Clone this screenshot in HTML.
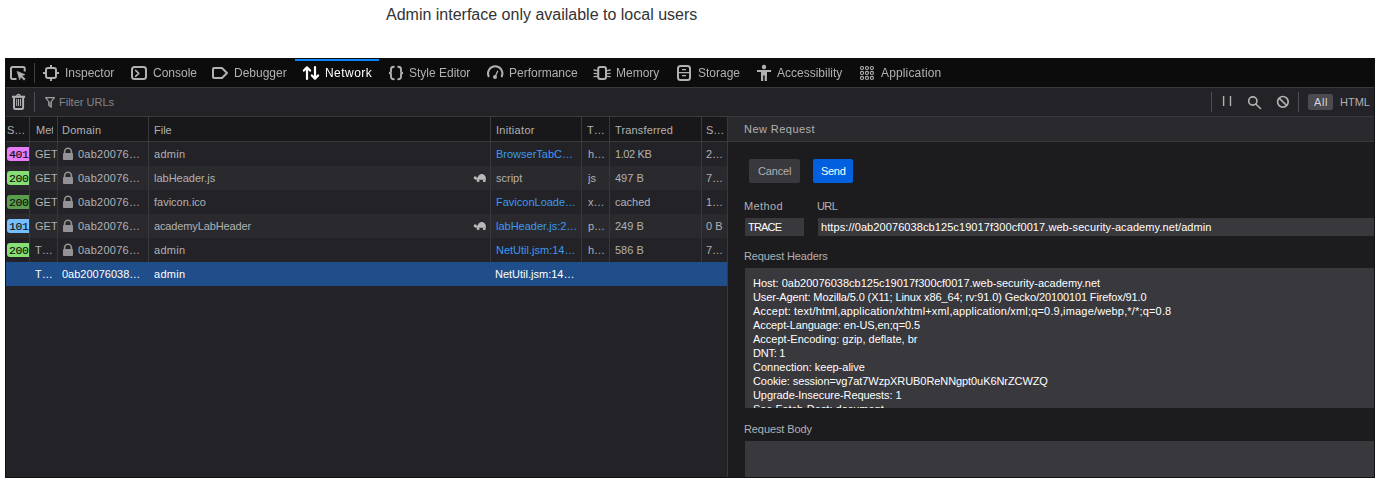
<!DOCTYPE html><html><head><meta charset="utf-8"><style>
*{box-sizing:border-box;margin:0;padding:0}
html,body{width:1380px;height:483px;overflow:hidden;background:#fff}
body{position:relative;font-family:"Liberation Sans",sans-serif}
.a{position:absolute;white-space:pre}
.r{position:absolute}
.t{position:absolute;white-space:pre;font-size:11px;line-height:24px;color:#b1b1b3;overflow:hidden}
.tab{position:absolute;white-space:pre;font-size:12px;line-height:29px;top:59px;color:#b1b1b3;will-change:transform}
svg{position:absolute;overflow:visible}
.lnk{color:#75bfff}
.badge{position:absolute;height:14px;font-family:"Liberation Mono",monospace;font-size:11.5px;letter-spacing:-0.45px;line-height:15px;-webkit-text-stroke:0.12px #0c0c0d;color:#0c0c0d;border-radius:3px 0 0 3px;padding-left:2px;overflow:hidden;white-space:pre}
.mono{font-family:"Liberation Mono",monospace}
</style></head><body>
<div class="a" style="left:386px;top:6px;font-size:16px;line-height:18px;color:#333">Admin interface only available to local users</div>
<div class="r" style="left:5px;top:58px;width:1370px;height:420px;background:#121214"></div>
<div class="r" style="left:6px;top:58px;width:1368px;height:29px;background:#0c0c0d"></div>
<div class="r" style="left:6px;top:87px;width:1368px;height:1px;background:#38383d"></div>
<div class="r" style="left:295px;top:59px;width:84px;height:2px;background:#0a84ff"></div>
<div class="r" style="left:6px;top:88px;width:1368px;height:28px;background:#232327"></div>
<div class="r" style="left:6px;top:116px;width:1368px;height:1px;background:#38383d"></div>
<div class="r" style="left:6px;top:117px;width:721px;height:360px;background:#232327"></div>
<div class="r" style="left:6px;top:117px;width:721px;height:24px;background:#18181a"></div>
<div class="r" style="left:6px;top:141px;width:1368px;height:1px;background:#38383d"></div>
<div class="r" style="left:6px;top:142px;width:721px;height:24px;background:#232327"></div>
<div class="r" style="left:6px;top:166px;width:721px;height:24px;background:#2a2a2e"></div>
<div class="r" style="left:6px;top:190px;width:721px;height:24px;background:#232327"></div>
<div class="r" style="left:6px;top:214px;width:721px;height:24px;background:#2a2a2e"></div>
<div class="r" style="left:6px;top:238px;width:721px;height:24px;background:#232327"></div>
<div class="r" style="left:29px;top:117px;width:1px;height:145px;background:#38383d"></div>
<div class="r" style="left:57px;top:117px;width:1px;height:145px;background:#38383d"></div>
<div class="r" style="left:148px;top:117px;width:1px;height:145px;background:#38383d"></div>
<div class="r" style="left:490px;top:117px;width:1px;height:145px;background:#38383d"></div>
<div class="r" style="left:581px;top:117px;width:1px;height:145px;background:#38383d"></div>
<div class="r" style="left:609px;top:117px;width:1px;height:145px;background:#38383d"></div>
<div class="r" style="left:701px;top:117px;width:1px;height:145px;background:#38383d"></div>
<div class="r" style="left:6px;top:262px;width:721px;height:24px;background:#204e8a"></div>
<div class="r" style="left:727px;top:117px;width:1px;height:360px;background:#38383d"></div>
<div class="r" style="left:728px;top:117px;width:646px;height:24px;background:#2a2a2e"></div>
<div class="r" style="left:728px;top:142px;width:646px;height:335px;background:#1c1c1f"></div>
<div class="tab" style="left:65px;color:#b1b1b3;letter-spacing:0px">Inspector</div>
<div class="tab" style="left:153px;color:#b1b1b3;letter-spacing:0px">Console</div>
<div class="tab" style="left:234px;color:#b1b1b3;letter-spacing:0px">Debugger</div>
<div class="tab" style="left:325px;color:#fff;letter-spacing:0.45px">Network</div>
<div class="tab" style="left:409px;color:#b1b1b3;letter-spacing:0px">Style Editor</div>
<div class="tab" style="left:509px;color:#b1b1b3;letter-spacing:0px">Performance</div>
<div class="tab" style="left:616px;color:#b1b1b3;letter-spacing:0px">Memory</div>
<div class="tab" style="left:698px;color:#b1b1b3;letter-spacing:0px">Storage</div>
<div class="tab" style="left:777px;color:#b1b1b3;letter-spacing:0px">Accessibility</div>
<div class="tab" style="left:881px;color:#b1b1b3;letter-spacing:0.15px">Application</div>
<div class="a" style="left:59px;top:88px;font-size:11px;line-height:28px;color:#85858a">Filter URLs</div>
<div class="r" style="left:1308px;top:94px;width:25px;height:16px;background:#4a4a4f;border-radius:2px"></div>
<div class="a" style="left:1314px;top:88px;font-size:11px;line-height:28px;color:#d7d7db;letter-spacing:0.6px">All</div>
<div class="a" style="left:1340px;top:88px;font-size:11px;line-height:28px;color:#b1b1b3">HTML</div>
<div class="r" style="left:34px;top:63px;width:1px;height:20px;background:#3f3f42"></div>
<div class="r" style="left:34px;top:92px;width:1px;height:20px;background:#4e4e52"></div>
<div class="r" style="left:1211px;top:92px;width:1px;height:20px;background:#4e4e52"></div>
<div class="r" style="left:1298px;top:92px;width:1px;height:20px;background:#4e4e52"></div>
<div class="t" style="left:7px;top:118px;width:22px">S…</div>
<div class="t" style="left:36px;top:118px;width:17px">Met</div>
<div class="t" style="left:62px;top:118px;width:85px;letter-spacing:0.25px">Domain</div>
<div class="t" style="left:154px;top:118px;width:330px">File</div>
<div class="t" style="left:496px;top:118px;width:85px;letter-spacing:0.3px">Initiator</div>
<div class="t" style="left:587px;top:118px;width:22px">T…</div>
<div class="t" style="left:615px;top:118px;width:85px;letter-spacing:0.15px">Transferred</div>
<div class="t" style="left:706px;top:118px;width:20px">S…</div>
<div class="badge" style="left:7px;top:147px;width:22px;background:#e67cf6">401</div>
<div class="t" style="left:35px;top:142px;width:22px">GET</div>
<svg style="left:63px;top:148px" width="10" height="12" viewBox="0 0 10 12"><path d="M1.6 5.2 V3.6 A3.4 3.4 0 0 1 8.4 3.6 V5.2" fill="none" stroke="#939395" stroke-width="1.6"/><rect x="0" y="5" width="10" height="7" rx="0.8" fill="#939395"/></svg>
<div class="t" style="left:78px;top:142px;width:70px;letter-spacing:0.25px">0ab20076…</div>
<div class="t" style="left:154px;top:142px;width:330px;letter-spacing:0.3px">admin</div>
<div class="t" style="left:496px;top:142px;width:85px;color:#3e98f0">BrowserTabC…</div>
<div class="t" style="left:588px;top:142px;width:21px">h…</div>
<div class="t" style="left:615px;top:142px;width:85px;letter-spacing:-0.4px">1.02 KB</div>
<div class="t" style="left:706px;top:142px;width:21px">2…</div>
<div class="badge" style="left:7px;top:171px;width:22px;background:#86de74">200</div>
<div class="t" style="left:35px;top:166px;width:22px">GET</div>
<svg style="left:63px;top:172px" width="10" height="12" viewBox="0 0 10 12"><path d="M1.6 5.2 V3.6 A3.4 3.4 0 0 1 8.4 3.6 V5.2" fill="none" stroke="#939395" stroke-width="1.6"/><rect x="0" y="5" width="10" height="7" rx="0.8" fill="#939395"/></svg>
<div class="t" style="left:78px;top:166px;width:70px;letter-spacing:0.25px">0ab20076…</div>
<div class="t" style="left:154px;top:166px;width:330px">labHeader.js</div>
<svg style="left:473px;top:174px" width="14" height="8" viewBox="0 0 14 8"><path d="M4.4 5.7 C4.4 2.1 6.5 0 8.8 0 C11.1 0 13 2.1 13 5.7 Z" fill="#b8b8bb"/><circle cx="2.2" cy="3.8" r="1.5" fill="#b8b8bb"/><rect x="2.2" y="3.6" width="3" height="2.1" fill="#b8b8bb"/><rect x="3.8" y="5.5" width="2.6" height="2.4" fill="#b8b8bb"/><rect x="9.9" y="5.5" width="2.7" height="2.4" fill="#b8b8bb"/></svg>
<div class="t" style="left:496px;top:166px;width:85px;color:#b1b1b3">script</div>
<div class="t" style="left:588px;top:166px;width:21px">js</div>
<div class="t" style="left:615px;top:166px;width:85px">497 B</div>
<div class="t" style="left:706px;top:166px;width:21px">7…</div>
<div class="badge" style="left:7px;top:195px;width:22px;background:#5a9e4d">200</div>
<div class="t" style="left:35px;top:190px;width:22px">GET</div>
<svg style="left:63px;top:196px" width="10" height="12" viewBox="0 0 10 12"><path d="M1.6 5.2 V3.6 A3.4 3.4 0 0 1 8.4 3.6 V5.2" fill="none" stroke="#939395" stroke-width="1.6"/><rect x="0" y="5" width="10" height="7" rx="0.8" fill="#939395"/></svg>
<div class="t" style="left:78px;top:190px;width:70px;letter-spacing:0.25px">0ab20076…</div>
<div class="t" style="left:154px;top:190px;width:330px">favicon.ico</div>
<div class="t" style="left:496px;top:190px;width:85px;color:#3e98f0">FaviconLoade…</div>
<div class="t" style="left:588px;top:190px;width:21px">x…</div>
<div class="t" style="left:615px;top:190px;width:85px">cached</div>
<div class="t" style="left:706px;top:190px;width:21px">1…</div>
<div class="badge" style="left:7px;top:219px;width:22px;background:#75bfff">101</div>
<div class="t" style="left:35px;top:214px;width:22px">GET</div>
<svg style="left:63px;top:220px" width="10" height="12" viewBox="0 0 10 12"><path d="M1.6 5.2 V3.6 A3.4 3.4 0 0 1 8.4 3.6 V5.2" fill="none" stroke="#939395" stroke-width="1.6"/><rect x="0" y="5" width="10" height="7" rx="0.8" fill="#939395"/></svg>
<div class="t" style="left:78px;top:214px;width:70px;letter-spacing:0.25px">0ab20076…</div>
<div class="t" style="left:154px;top:214px;width:330px;letter-spacing:-0.13px">academyLabHeader</div>
<svg style="left:473px;top:222px" width="14" height="8" viewBox="0 0 14 8"><path d="M4.4 5.7 C4.4 2.1 6.5 0 8.8 0 C11.1 0 13 2.1 13 5.7 Z" fill="#b8b8bb"/><circle cx="2.2" cy="3.8" r="1.5" fill="#b8b8bb"/><rect x="2.2" y="3.6" width="3" height="2.1" fill="#b8b8bb"/><rect x="3.8" y="5.5" width="2.6" height="2.4" fill="#b8b8bb"/><rect x="9.9" y="5.5" width="2.7" height="2.4" fill="#b8b8bb"/></svg>
<div class="t" style="left:496px;top:214px;width:85px;color:#3e98f0">labHeader.js:2…</div>
<div class="t" style="left:588px;top:214px;width:21px">p…</div>
<div class="t" style="left:615px;top:214px;width:85px">249 B</div>
<div class="t" style="left:706px;top:214px;width:21px">0 B</div>
<div class="badge" style="left:7px;top:243px;width:22px;background:#86de74">200</div>
<div class="t" style="left:35px;top:238px;width:22px">T…</div>
<svg style="left:63px;top:244px" width="10" height="12" viewBox="0 0 10 12"><path d="M1.6 5.2 V3.6 A3.4 3.4 0 0 1 8.4 3.6 V5.2" fill="none" stroke="#939395" stroke-width="1.6"/><rect x="0" y="5" width="10" height="7" rx="0.8" fill="#939395"/></svg>
<div class="t" style="left:78px;top:238px;width:70px;letter-spacing:0.25px">0ab20076…</div>
<div class="t" style="left:154px;top:238px;width:330px;letter-spacing:0.3px">admin</div>
<div class="t" style="left:496px;top:238px;width:85px;color:#3e98f0">NetUtil.jsm:14…</div>
<div class="t" style="left:588px;top:238px;width:21px">h…</div>
<div class="t" style="left:615px;top:238px;width:85px">586 B</div>
<div class="t" style="left:706px;top:238px;width:21px">7…</div>
<div class="t" style="left:35px;top:262px;width:22px;color:#fff">T…</div>
<div class="t" style="left:62px;top:262px;width:86px;color:#fff">0ab20076038…</div>
<div class="t" style="left:154px;top:262px;width:330px;color:#fff;letter-spacing:0.3px">admin</div>
<div class="t" style="left:495px;top:262px;width:86px;color:#fff">NetUtil.jsm:14…</div>
<div class="t" style="left:744px;top:117px;width:200px;color:#b1b1b3;letter-spacing:0.45px">New Request</div>
<div class="r" style="left:749px;top:159px;width:51px;height:24px;background:#38383d;border-radius:2px"></div>
<div class="a" style="left:758px;top:159px;font-size:11px;line-height:24px;color:#b1b1b3;letter-spacing:-0.15px">Cancel</div>
<div class="r" style="left:813px;top:159px;width:40px;height:24px;background:#0060df;border-radius:2px"></div>
<div class="a" style="left:821px;top:159px;font-size:11px;line-height:24px;color:#fff;letter-spacing:-0.3px">Send</div>
<div class="a" style="left:744px;top:194px;font-size:11px;line-height:24px;color:#b1b1b3;letter-spacing:0.4px">Method</div>
<div class="a" style="left:817px;top:194px;font-size:11px;line-height:24px;color:#b1b1b3;letter-spacing:-0.6px">URL</div>
<div class="r" style="left:745px;top:218px;width:59px;height:18px;background:#38383d"></div>
<div class="r" style="left:818px;top:218px;width:556px;height:18px;background:#38383d"></div>
<div class="a" style="left:748px;top:218px;font-size:11px;line-height:18px;color:#fff;letter-spacing:-0.8px">TRACE</div>
<div class="a" style="left:821px;top:218px;font-size:11px;line-height:18px;color:#fff;letter-spacing:0.086px">https://0ab20076038cb125c19017f300cf0017.web-security-academy.net/admin</div>
<div class="a" style="left:744px;top:244px;font-size:11px;line-height:24px;color:#b1b1b3;letter-spacing:-0.13px">Request Headers</div>
<div class="r" style="left:745px;top:268px;width:629px;height:140px;background:#38383d;overflow:hidden"><div class="a" style="left:8px;top:8px;font-size:11px;line-height:14px;color:#fff;letter-spacing:0px">Host: 0ab20076038cb125c19017f300cf0017.web-security-academy.net</div><div class="a" style="left:8px;top:22px;font-size:11px;line-height:14px;color:#fff;letter-spacing:-0.115px">User-Agent: Mozilla/5.0 (X11; Linux x86_64; rv:91.0) Gecko/20100101 Firefox/91.0</div><div class="a" style="left:8px;top:36px;font-size:11px;line-height:14px;color:#fff;letter-spacing:0.17px">Accept: text/html,application/xhtml+xml,application/xml;q=0.9,image/webp,*/*;q=0.8</div><div class="a" style="left:8px;top:50px;font-size:11px;line-height:14px;color:#fff;letter-spacing:-0.087px">Accept-Language: en-US,en;q=0.5</div><div class="a" style="left:8px;top:64px;font-size:11px;line-height:14px;color:#fff;letter-spacing:0px">Accept-Encoding: gzip, deflate, br</div><div class="a" style="left:8px;top:78px;font-size:11px;line-height:14px;color:#fff;letter-spacing:-0.25px">DNT: 1</div><div class="a" style="left:8px;top:92px;font-size:11px;line-height:14px;color:#fff;letter-spacing:0px">Connection: keep-alive</div><div class="a" style="left:8px;top:106px;font-size:11px;line-height:14px;color:#fff;letter-spacing:-0.08px">Cookie: session=vg7at7WzpXRUB0ReNNgpt0uK6NrZCWZQ</div><div class="a" style="left:8px;top:120px;font-size:11px;line-height:14px;color:#fff;letter-spacing:-0.07px">Upgrade-Insecure-Requests: 1</div><div class="a" style="left:8px;top:134px;font-size:11px;line-height:14px;color:#fff;letter-spacing:0px">Sec-Fetch-Dest: document</div></div>
<div class="a" style="left:744px;top:417px;font-size:11px;line-height:24px;color:#b1b1b3;letter-spacing:-0.1px">Request Body</div>
<div class="r" style="left:745px;top:441px;width:629px;height:36px;background:#38383d"></div>
<svg style="left:0;top:0" width="1380" height="483" viewBox="0 0 1380 483"><path d="M16.5 79 H12.5 Q11 79 11 77.5 V68.5 Q11 67 12.5 67 H23.2 Q24.7 67 24.7 68.5 V71.5" fill="none" stroke="#b1b1b3" stroke-width="2"/><path d="M17 71.3 L25 74.6 L22 75.7 L25.3 79 L24 80.2 L20.8 77 L19.6 80 Z" fill="#b1b1b3" stroke="#b1b1b3" stroke-width="0.5" stroke-linejoin="round"/><rect x="46" y="68" width="10" height="10" rx="2" fill="none" stroke="#b1b1b3" stroke-width="2"/><path d="M51 65 V67 M51 79 V81 M43 73 H45 M57 73 H59" stroke="#b1b1b3" stroke-width="2"/><rect x="132" y="67" width="14" height="12" rx="2.5" fill="none" stroke="#b1b1b3" stroke-width="2"/><path d="M135.6 70.3 L138.8 73.3 L135.6 76.3" fill="none" stroke="#b1b1b3" stroke-width="1.6" stroke-linecap="round" stroke-linejoin="round"/><path d="M214 68 H222 L227 73 L222 78 H214 Q213 78 213 77 V69 Q213 68 214 68 Z" fill="none" stroke="#b1b1b3" stroke-width="2" stroke-linejoin="round"/><path d="M307 79 V67.5 M303.9 70.6 L307 67.3 L310.1 70.6 M315 67 V78.5 M311.9 75.4 L315 78.7 L318.1 75.4" fill="none" stroke="#fff" stroke-width="2.2" stroke-linecap="round" stroke-linejoin="round"/><path d="M393.8 66.8 C391.2 66.8 391 67.8 391 69.3 V71.6 C391 72.5 390.3 73 389 73 C390.3 73 391 73.5 391 74.4 V76.7 C391 78.2 391.2 79.2 393.8 79.2" fill="none" stroke="#b1b1b3" stroke-width="1.9" stroke-linecap="round"/><path d="M398.2 66.8 C400.8 66.8 401 67.8 401 69.3 V71.6 C401 72.5 401.7 73 403 73 C401.7 73 401 73.5 401 74.4 V76.7 C401 78.2 400.8 79.2 398.2 79.2" fill="none" stroke="#b1b1b3" stroke-width="1.9" stroke-linecap="round"/><path d="M488.6 76.3 A7.2 7.2 0 1 1 501.8 76.3" fill="none" stroke="#b1b1b3" stroke-width="2" stroke-linecap="round"/><path d="M495 77 L497.6 71.2" stroke="#b1b1b3" stroke-width="1.3" stroke-linecap="round"/><circle cx="495" cy="77" r="2" fill="#b1b1b3"/><rect x="598.2" y="67" width="7.8" height="12" rx="2" fill="none" stroke="#b1b1b3" stroke-width="2"/><path d="M594 70 L597 70.6 M594 73.3 L597 73.6 M594 76.6 L597 76.4 M607.2 70.6 L610.2 70 M607.2 73.6 L610.2 73.3 M607.2 76.4 L610.2 76.6" stroke="#b1b1b3" stroke-width="1.3" stroke-linecap="round"/><rect x="678" y="66" width="12" height="14" rx="2.5" fill="none" stroke="#b1b1b3" stroke-width="2"/><path d="M678 72.6 H690 M682 69.6 H686 M682 75.6 H686" stroke="#b1b1b3" stroke-width="1.3"/><circle cx="764" cy="67" r="2.2" fill="#b1b1b3"/><rect x="757" y="70" width="14.1" height="2" fill="#b1b1b3"/><rect x="761" y="72" width="6" height="3.5" fill="#b1b1b3"/><rect x="761" y="75" width="2.2" height="6" fill="#b1b1b3"/><rect x="764.7" y="75" width="2.2" height="6" fill="#b1b1b3"/><circle cx="862" cy="68" r="1.55" fill="none" stroke="#b1b1b3" stroke-width="1.1"/><circle cx="862" cy="72.95" r="1.55" fill="none" stroke="#b1b1b3" stroke-width="1.1"/><circle cx="862" cy="77.9" r="1.55" fill="none" stroke="#b1b1b3" stroke-width="1.1"/><circle cx="866.95" cy="68" r="1.55" fill="none" stroke="#b1b1b3" stroke-width="1.1"/><circle cx="866.95" cy="72.95" r="1.55" fill="none" stroke="#b1b1b3" stroke-width="1.1"/><circle cx="866.95" cy="77.9" r="1.55" fill="none" stroke="#b1b1b3" stroke-width="1.1"/><circle cx="871.9" cy="68" r="1.55" fill="none" stroke="#b1b1b3" stroke-width="1.1"/><circle cx="871.9" cy="72.95" r="1.55" fill="none" stroke="#b1b1b3" stroke-width="1.1"/><circle cx="871.9" cy="77.9" r="1.55" fill="none" stroke="#b1b1b3" stroke-width="1.1"/><path d="M12 96.8 H25.1" stroke="#b1b1b3" stroke-width="2.2"/><path d="M16.5 95.8 Q18.5 93.2 20.5 95.8" fill="none" stroke="#b1b1b3" stroke-width="1.5"/><path d="M14 98 V107.5 Q14 109 15.5 109 H21.6 Q23.1 109 23.1 107.5 V98" fill="none" stroke="#b1b1b3" stroke-width="2"/><path d="M16.7 99 V106 M18.5 99 V106 M20.5 99 V106" stroke="#b1b1b3" stroke-width="1"/><path d="M48.9 101.8 L51.2 101.8 V106.8 L48.9 105.2 Z" fill="#6a6a6e"/><path d="M45.6 97.6 H54.4 L51.3 101.6 V107.3 L48.7 105.4 V101.6 Z" fill="none" stroke="#a0a0a3" stroke-width="1.1" stroke-linejoin="round"/><path d="M1223.6 96 V106 M1230.5 96 V106" stroke="#b1b1b3" stroke-width="1.4"/><circle cx="1252.8" cy="101" r="4.1" fill="none" stroke="#b1b1b3" stroke-width="1.6"/><path d="M1255.8 104 L1260.5 108.5" stroke="#b1b1b3" stroke-width="1.6" stroke-linecap="round"/><circle cx="1282.9" cy="101.8" r="5.3" fill="none" stroke="#b1b1b3" stroke-width="1.7"/><path d="M1279.2 98.1 L1286.6 105.5" stroke="#b1b1b3" stroke-width="1.7"/></svg>
</body></html>
